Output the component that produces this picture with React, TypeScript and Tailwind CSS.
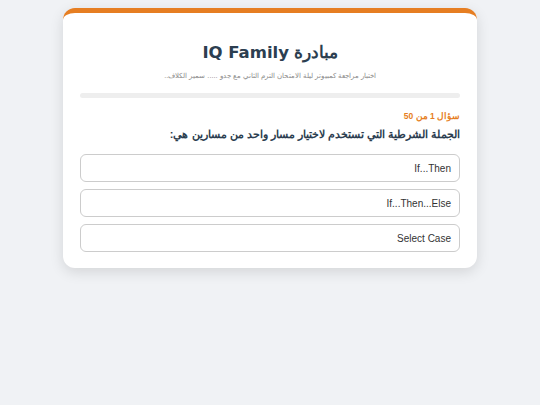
import React from "react";

const options = ["If...Then", "If...Then...Else", "Select Case"];

const arabic = { fontFamily: '"Liberation Sans", sans-serif' };

const App = () => {
  return (
    <div dir="rtl" className="min-h-[405px] bg-[#f0f2f5] pt-[8px]" style={arabic}>
      <div className="mx-auto w-[414px] bg-white rounded-[12px] border-t-[5px] border-[#e67e22] shadow-[0_4px_14px_rgba(0,0,0,0.12)] px-[17px] pt-[26px] pb-[16px]">
        <h1 className="text-center text-[16.5px] font-bold text-[#2c3e50] leading-[26px]">
          <span>مبادرة</span>{" "}
          <span style={{ fontFamily: '"DejaVu Sans", sans-serif' }}>IQ Family</span>
        </h1>
        <p className="text-center text-[7.3px] text-[#8a8a8a] mt-[4px] leading-[12px]">
          اختبار مراجعة كمبيوتر ليلة الامتحان الترم الثاني مع جدو ..... سمير الكلاف..
        </p>
        <div className="mt-[11px] h-[5px] rounded-full bg-[#eeeeee]" />
        <div className="mt-[11px] text-[8.5px] font-bold text-[#e67e22] leading-[14px]">
          سؤال 1 من 50
        </div>
        <div className="mt-[2px] text-[11px] font-bold text-[#2c3e50] leading-[18px]">
          الجملة الشرطية التي تستخدم لاختيار مسار واحد من مسارين هي:
        </div>
        <div className="mt-[11px] flex flex-col gap-[7px]">
          {options.map((o) => (
            <button
              key={o}
              className="h-[28px] w-full rounded-[6px] border border-[#cccccc] bg-white px-[8px] text-right text-[10px] text-[#333]"
            >
              {o}
            </button>
          ))}
        </div>
      </div>
    </div>
  );
};

export default App;
